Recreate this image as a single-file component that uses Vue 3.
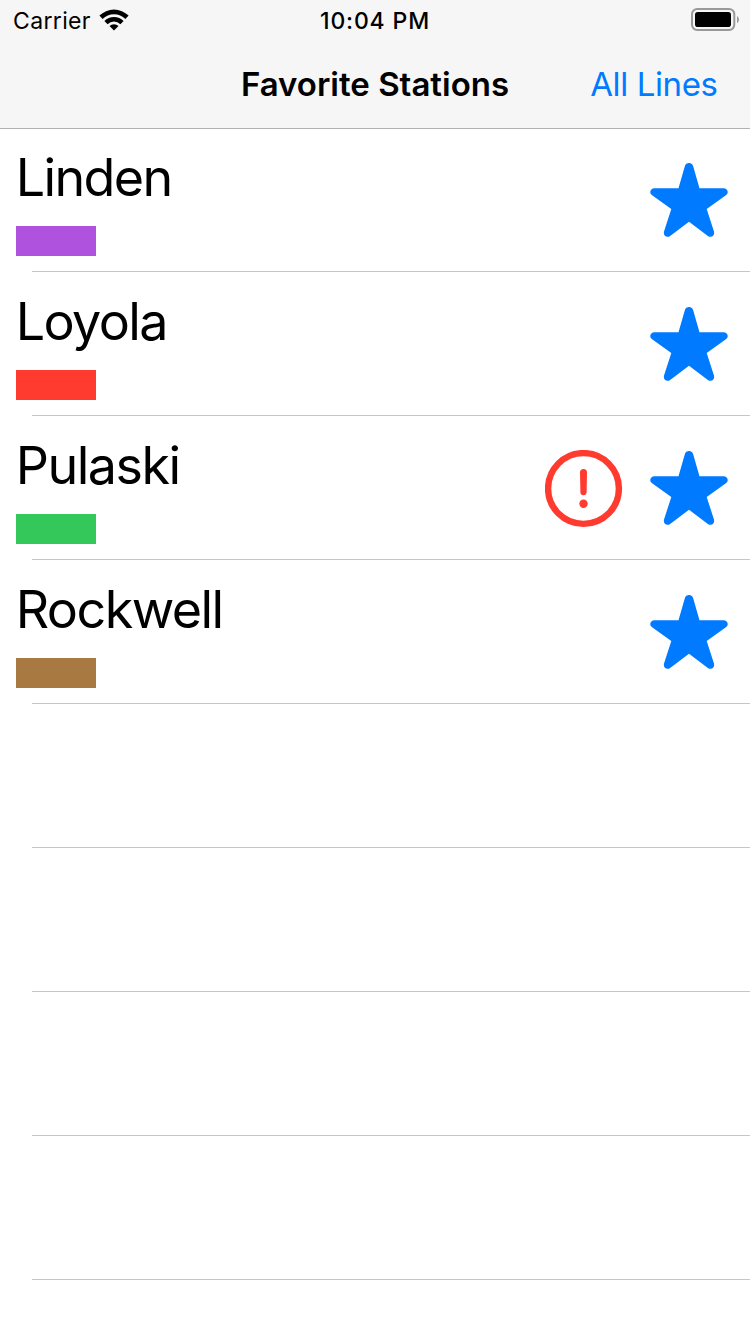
<script setup>
const stations = [
  { name: 'Linden', color: '#af52de', tracking: '-1.6px' },
  { name: 'Loyola', color: '#ff3b30', tracking: '-1.6px' },
  { name: 'Pulaski', color: '#34c759', tracking: '-1.5px', alert: true },
  { name: 'Rockwell', color: '#a97942', tracking: '-1.55px' },
]
const emptyRows = 5
</script>

<template>
  <div class="screen">
    <header class="top">
      <div class="status">
        <div class="carrier">
          <span>Carrier</span>
          <svg class="wifi" width="30" height="22" viewBox="0 0 30 22">
            <path d="M0.4 6.6 A20.7 20.7 0 0 1 29.6 6.6 L26.4 10 A16.2 16.2 0 0 0 3.6 10 Z" />
            <path d="M5.4 12 A13.3 13.3 0 0 1 24.6 12 L21.4 15.2 A9 9 0 0 0 8.6 15.2 Z" />
            <path d="M10.5 17.1 A6.4 6.4 0 0 1 19.5 17.1 L15 21.6 Z" />
          </svg>
        </div>
        <time class="clock">10:04 PM</time>
        <svg class="battery" width="49" height="24" viewBox="0 0 49 24">
          <rect x="1" y="1" width="42.3" height="21" rx="5.2" fill="none" stroke="#999" stroke-width="2" />
          <rect x="4" y="4" width="36" height="15" rx="2.8" />
          <path d="M46 8 Q48 9 48 11.5 T46 15 Z" fill="#999" />
        </svg>
      </div>
      <nav class="bar">
        <h1>Favorite Stations</h1>
        <a>All Lines</a>
      </nav>
    </header>
    <ul>
      <li v-for="s in stations" :key="s.name">
        <div class="info">
          <span class="name" :style="{ letterSpacing: s.tracking }">{{ s.name }}</span>
          <span class="line" :style="{ backgroundColor: s.color }"></span>
        </div>
        <svg v-if="s.alert" class="alert" width="78" height="78" viewBox="0 0 78 78">
          <circle cx="38.5" cy="38.5" r="35.4" fill="none" stroke="#ff3b30" stroke-width="6.4" />
          <path d="M35 22.4 Q35 18.9 38.5 18.9 T42 22.4 L41.6 42.3 Q41.4 45.2 38.5 45.2 T35.4 42.3 Z" fill="#ff3b30" />
          <circle cx="38.5" cy="53.7" r="4.2" fill="#ff3b30" />
        </svg>
        <svg class="star" width="78" height="75" viewBox="0 0 78 75">
          <path d="M34.9 3.1 C35.9 -1 42.1 -1 43.1 3.1 L49.5 25.2 H73.4 C77.8 25.2 79.2 29.8 75.9 32.2 L56.7 46 L63.9 68.3 C65.2 72.3 61.4 75.3 57.9 72.9 L39 58.7 L20.1 72.9 C16.6 75.3 12.8 72.3 14.1 68.3 L21.3 46 L2.1 32.2 C-1.2 29.8 0.2 25.2 4.6 25.2 H28.5 Z" />
        </svg>
      </li>
      <li v-for="n in emptyRows" :key="n"></li>
    </ul>
  </div>
</template>

<style>
body { margin: 0; background: #fff; }
</style>

<style scoped>
.screen {
  width: 750px;
  height: 1334px;
  overflow: hidden;
  background: #fff;
  color: #000;
  font-family: Inter, "Liberation Sans", sans-serif;
}
.top {
  position: relative;
  height: 128px;
  background: #f6f6f6;
  box-shadow: 0 1px #b2b2b2;
}
.status {
  display: grid;
  grid-template-columns: 1fr auto 1fr;
  height: 40px;
  align-items: center;
}
.carrier {
  display: flex;
  align-items: center;
  gap: 8.5px;
  padding-left: 13px;
  font-size: 23px;
  letter-spacing: 0.35px;
}
.carrier span,
.clock {
  line-height: 28px;
  padding-top: 2px;
}
.clock {
  font-size: 23px;
  font-weight: 550;
  letter-spacing: 0.85px;
}
.battery {
  justify-self: end;
  margin-right: 10px;
}
.bar {
  display: grid;
  grid-template-columns: 1fr auto 1fr;
  height: 88px;
  align-items: center;
}
h1 {
  grid-column: 2;
  margin: 0;
  font-size: 33px;
  line-height: 40px;
  font-weight: 600;
}
a {
  justify-self: end;
  margin-right: 32.5px;
  font-size: 33px;
  line-height: 40px;
  letter-spacing: -0.4px;
  color: #007aff;
}
ul {
  margin: 0;
  padding: 0;
  list-style: none;
}
li {
  display: flex;
  height: 144px;
  box-sizing: border-box;
  padding: 18px 22px 0 16px;
  background: linear-gradient(#c6c6c8, #c6c6c8) 32px 100% / 100% 1px no-repeat;
}
.info {
  display: flex;
  flex: 1;
  flex-direction: column;
  gap: 16px;
}
.name {
  margin-left: -0.3px;
  font-size: 52px;
  line-height: 64px;
}
.line {
  width: 80px;
  height: 30px;
}
.alert {
  margin: 16px 27px 0 0;
}
.star {
  margin-top: 17px;
  fill: #007aff;
}
</style>
